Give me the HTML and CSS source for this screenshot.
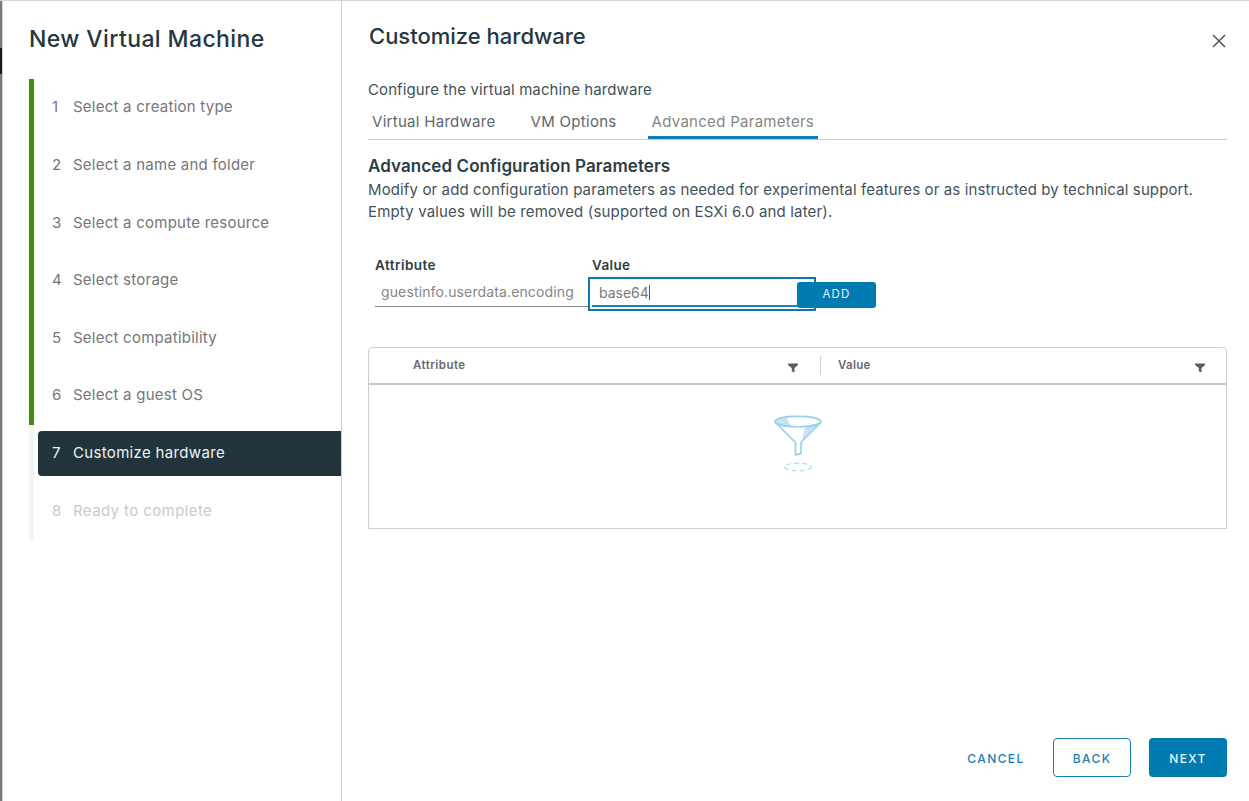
FILE: index.html
```html
<!DOCTYPE html>
<html lang="en">
<head>
<meta charset="utf-8">
<title>New Virtual Machine</title>
<link rel="stylesheet" href="styles.css">
</head>
<body>
<div class="wizard">
  <div class="backdrop"><span class="backdrop-mark"></span></div>
  <aside class="sidebar">
    <h1 class="wizard-title">New Virtual Machine</h1>
    <ol class="steps">
      <li class="step done"><div class="step-link"><span class="num">1</span><span>Select a creation type</span></div></li>
      <li class="step done"><div class="step-link"><span class="num">2</span><span>Select a name and folder</span></div></li>
      <li class="step done"><div class="step-link"><span class="num">3</span><span>Select a compute resource</span></div></li>
      <li class="step done"><div class="step-link"><span class="num">4</span><span>Select storage</span></div></li>
      <li class="step done"><div class="step-link"><span class="num">5</span><span>Select compatibility</span></div></li>
      <li class="step done"><div class="step-link"><span class="num">6</span><span>Select a guest OS</span></div></li>
      <li class="step active"><div class="step-link"><span class="num">7</span><span>Customize hardware</span></div></li>
      <li class="step disabled"><div class="step-link"><span class="num">8</span><span>Ready to complete</span></div></li>
    </ol>
  </aside>
  <main class="content">
    <header class="page-head">
      <h2 class="page-title">Customize hardware</h2>
      <svg class="close" viewBox="0 0 16 16" width="16" height="16"><path d="M2 2L14 14M14 2L2 14"/></svg>
    </header>
    <p class="intro">Configure the virtual machine hardware</p>
    <nav class="tabs">
      <span class="tab">Virtual Hardware</span>
      <span class="tab">VM Options</span>
      <span class="tab selected">Advanced Parameters</span>
    </nav>
    <h3 class="section-title">Advanced Configuration Parameters</h3>
    <p class="desc"><span>Modify or add configuration parameters as needed for experimental features or as instructed by technical support.</span><br><span class="desc-note">Empty values will be removed (supported on ESXi 6.0 and later).</span></p>
    <div class="form">
      <div class="field attribute">
        <label class="label">Attribute</label>
        <div class="input">guestinfo.userdata.encoding</div>
      </div>
      <div class="field value">
        <label class="label value-label">Value</label>
        <div class="focus"><div class="focus-input"><span>base64</span><i class="caret"></i></div></div>
      </div>
      <div class="add">ADD</div>
    </div>
    <section class="grid">
      <div class="grid-head">
        <div class="col"><span>Attribute</span><svg class="filter" viewBox="0 0 10 10" width="10" height="10"><path d="M0 .5H10V2L6.500 5V9.500L3.800 8.200V5L0 2Z"/></svg></div>
        <div class="col second"><span>Value</span><svg class="filter" viewBox="0 0 10 10" width="10" height="10"><path d="M0 .5H10V2L6.500 5V9.500L3.800 8.200V5L0 2Z"/></svg></div>
      </div>
      <div class="grid-body">
        <svg class="funnel" viewBox="0 0 50 60" width="50" height="60">
          <path class="shade" d="M2 7L13 3L18 12C10 12 4 10 2 7ZM32 13L46 8.500L29 27V25Z"/>
          <path class="line" d="M2 7.500C4 .7 46 .7 48 7.500C46 14.500 4 14.500 2 7.500Z"/>
          <path class="line" d="M2 8L22.500 28.500V41L28 39.500V28.500L48 8"/>
          <ellipse class="dash" cx="25" cy="53" rx="13.500" ry="3.800"/>
        </svg>
      </div>
    </section>
    <footer class="actions">
      <div class="btn link">CANCEL</div>
      <div class="btn outline">BACK</div>
      <div class="btn primary">NEXT</div>
    </footer>
  </main>
</div>
</body>
</html>
```
FILE: styles.css
```css
* { box-sizing: border-box; }
body { margin: 0; font-family: Inter, "Open Sans", sans-serif; color: #43525a; background: #fff; }
h1, h2, h3, p, ol { margin: 0; padding: 0; list-style: none; }
.wizard { display: grid; grid-template-columns: 3px 339px 1fr; width: 1249px; height: 801px; overflow: hidden; border-top: 1px solid #d3d6d8; }
.backdrop { background: linear-gradient(90deg, #797979 0 2px, #d4d4d4 2px); padding-top: 47px; }
.backdrop-mark { display: block; width: 2px; height: 26px; background: #151c20; }
.sidebar { border-right: 1px solid #cfd1d2; padding-left: 26px; }
.wizard-title { height: 78px; padding-top: 22px; line-height: 32px; font-size: 23px; font-weight: 500; color: #25363f; letter-spacing: .4px; white-space: nowrap; }
.step { height: 57.600px; border-left: 5px solid #eef7f7; padding: 6px 0 6px 4px; }
.step.done { border-color: #42900f; }
.step-link { display: flex; align-items: center; height: 45.600px; padding: 0 0 1.800px 14px; border-radius: 4px 0 0 4px; font-size: 15px; color: #767676; white-space: nowrap; letter-spacing: .24px; }
.num { width: 21px; }
.active .step-link { background: #21333b; color: #eef2f4; letter-spacing: .33px; }
.disabled .step-link { color: #c5cbcd; letter-spacing: .4px; }
.content { display: flex; flex-direction: column; padding: 0 22px 24px 26px; min-width: 0; white-space: nowrap; }
.page-head { display: flex; justify-content: space-between; height: 78px; padding: 20px 0 0 1px; }
.page-title { font-size: 22px; line-height: 30px; font-weight: 500; color: #25363f; }
.close { margin-top: 12px; }
.close path { fill: none; stroke: #4c5860; stroke-width: 1.500; }
.intro { height: 24px; font-size: 15px; line-height: 21px; letter-spacing: .09px; }
.tabs { display: flex; gap: 27px; height: 37px; border-bottom: 1px solid #cdd0d1; font-size: 15px; }
.tab { height: 36px; line-height: 37px; padding: 0 4px; color: #5b676e; letter-spacing: .29px; }
.tab.selected { border-bottom: 3px solid #0b7fb3; color: #858585; }
.section-title { padding-top: 15px; height: 39px; font-size: 17px; line-height: 22px; font-weight: 600; color: #2c3d46; letter-spacing: .09px; }
.desc { height: 67px; font-size: 15px; line-height: 22px; letter-spacing: .12px; }
.desc-note { letter-spacing: .16px; }
.form { display: flex; align-items: flex-start; height: 101px; padding-left: 7px; }
.field { padding-top: 7px; }
.label { display: block; height: 25px; line-height: 24px; font-size: 13.500px; font-weight: 600; color: #2c3d46; letter-spacing: .45px; }
.attribute { width: 213px; }
.input { height: 30px; line-height: 18px; padding: 6px 0 0 6px; border-bottom: 1px solid #7d868b; font-size: 14px; color: #858585; letter-spacing: .13px; margin-top: -1px; }
.value { width: 228px; }
.value-label { padding-left: 4px; letter-spacing: .35px; }
.focus { height: 34px; margin-top: -1px; border: 2px solid #0e78a9; padding: 1px 2px 2px; }
.focus-input { display: flex; align-items: center; height: 27px; padding: 0 0 1px 7px; border-bottom: 2px solid #1687bd; font-size: 14px; color: #7a7a7a; }
.caret { width: 1px; height: 15px; background: #555; }
.add { width: 79px; height: 26px; margin: 36px 0 0 -19px; border-radius: 3px; background: #007bb1; color: #e7f3f9; font-size: 11.500px; line-height: 25px; text-align: center; letter-spacing: 1.100px; }
.grid { height: 182px; border: 1px solid #cdd0d1; border-radius: 4px 4px 0 0; }
.grid-head { display: flex; height: 37px; border-bottom: 2px solid #c6c8c8; align-items: center; font-size: 11.500px; font-weight: 600; color: #6a6a6a; letter-spacing: .45px; }
.col { display: flex; justify-content: space-between; width: 451px; padding: 0 22px 0 44px; line-height: 19px; }
.second { flex: 1; border-left: 1px solid #d0d0d0; padding: 0 21px 0 17px; letter-spacing: .3px; }
.filter { margin-top: 7px; fill: #5c5c5c; }
.grid-body { display: flex; justify-content: center; padding-top: 29px; }
.shade { fill: #c5e3f4; }
.line { fill: none; stroke: #9bd0e9; stroke-width: 1.700; }
.dash { fill: none; stroke: #b4dced; stroke-width: 1.200; stroke-dasharray: 5 3; }
.actions { display: flex; justify-content: flex-end; margin-top: auto; }
.btn { width: 78px; height: 39px; line-height: 41px; text-align: center; font-size: 12px; font-weight: 500; letter-spacing: 1.400px; border-radius: 4px; }
.link { color: #1681b0; margin-right: 18px; }
.outline { border: 1px solid #1b83b1; line-height: 39px; color: #1681b0; margin-right: 18px; }
.primary { background: #007bb1; color: #e9f5fa; }
```
